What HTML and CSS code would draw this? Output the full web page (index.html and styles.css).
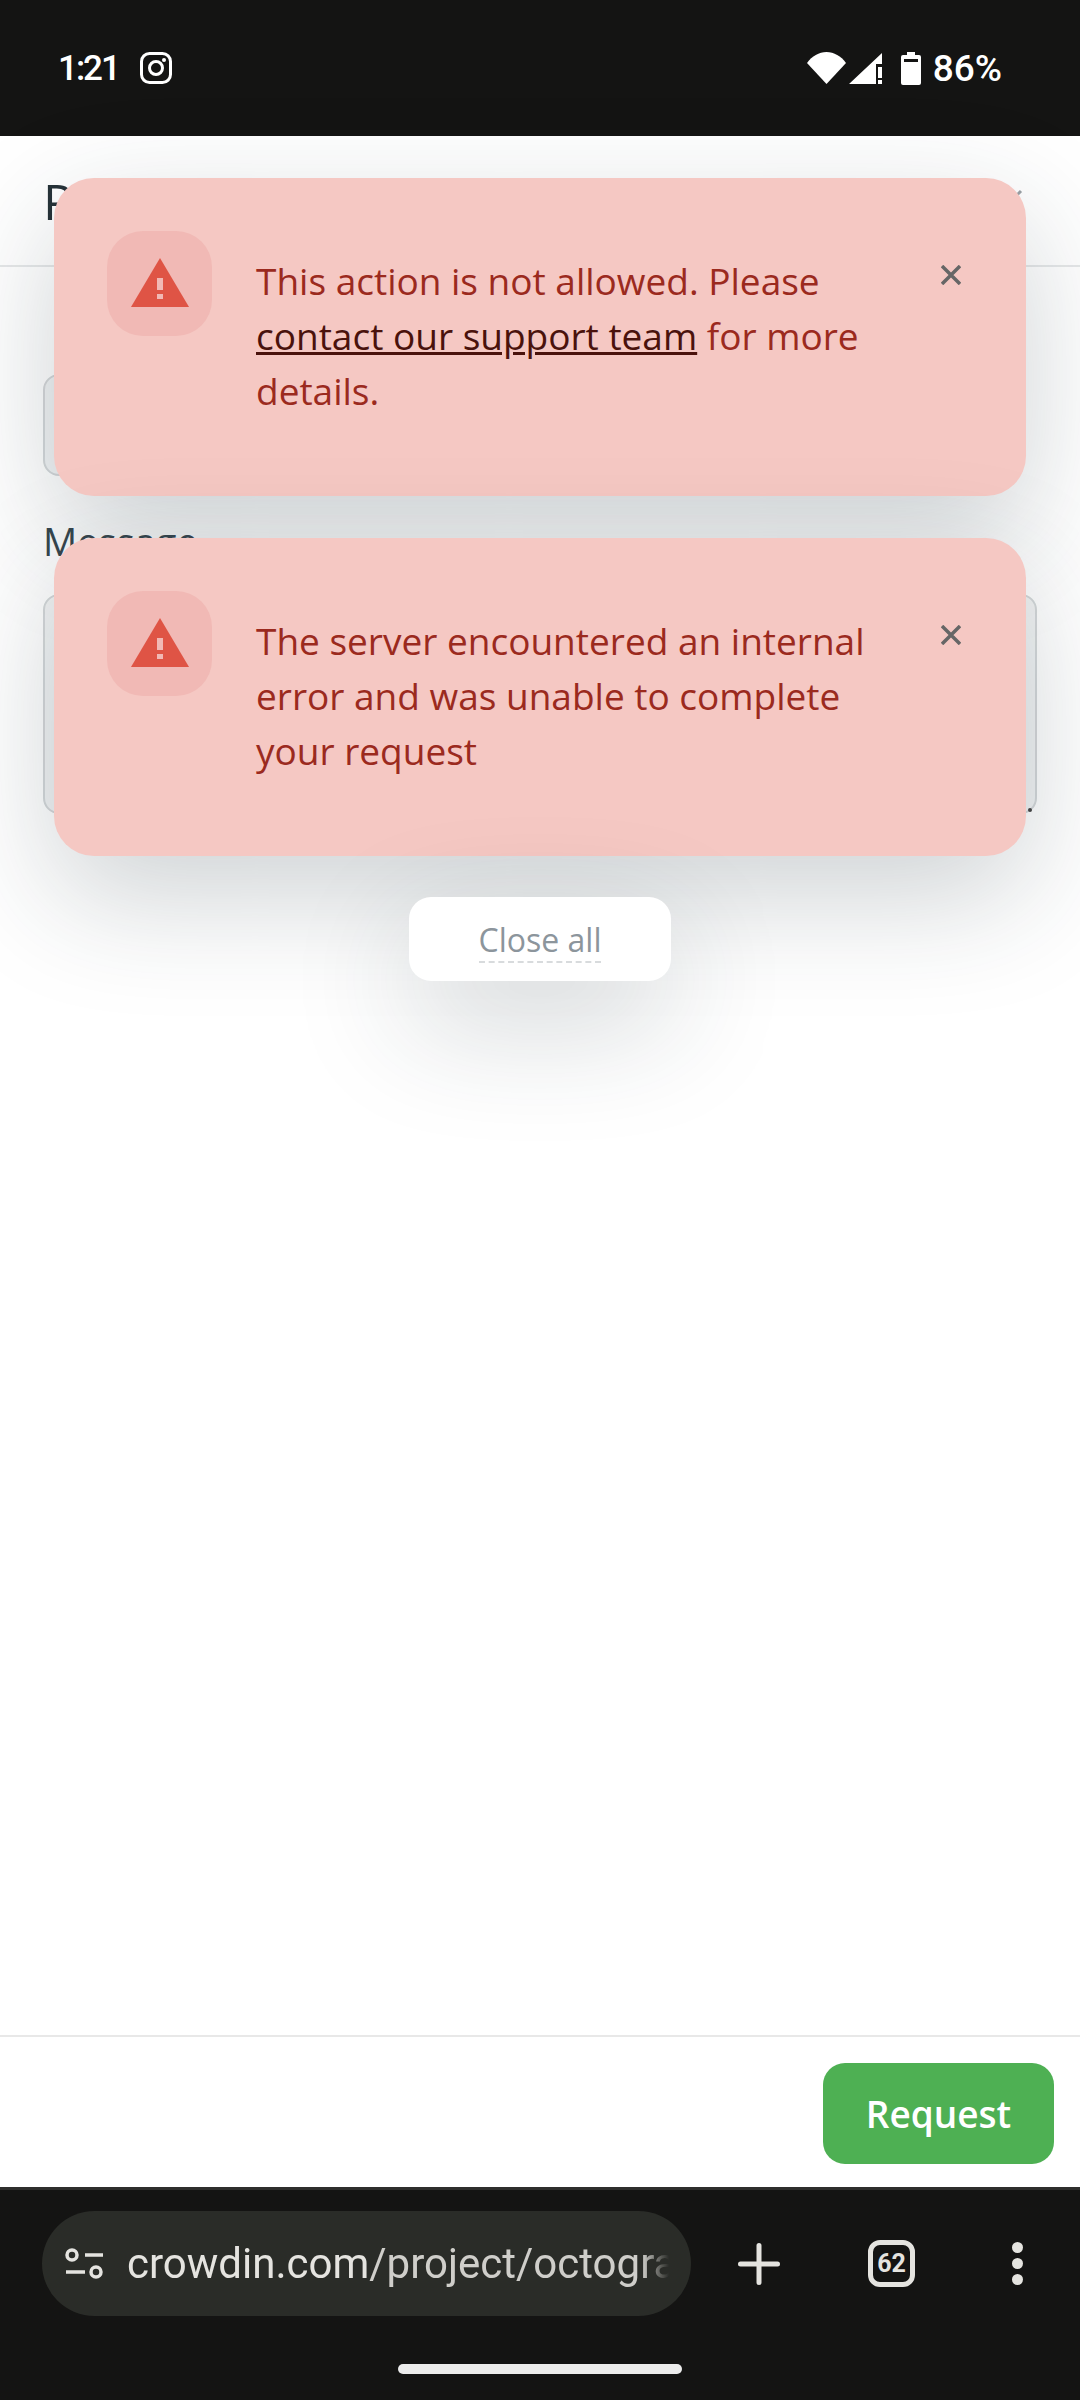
FILE: index.html
```html
<!DOCTYPE html>
<html lang="en">
<head>
  <meta charset="UTF-8">
  <title>Crowdin request</title>
  <link rel="stylesheet" href="styles.css">
</head>
<body>

  <!-- Phone status bar -->
  <div class="status-bar">
    <div class="status-left">
      <span class="status-time">1:21</span>
      <svg class="icon-insta" viewBox="0 0 32 32" width="32" height="32">
        <rect x="1.5" y="1.5" width="29" height="29" rx="8" fill="none" stroke="#fff" stroke-width="3"/>
        <circle cx="16" cy="16" r="6.5" fill="none" stroke="#fff" stroke-width="3"/>
        <circle cx="24" cy="8" r="2" fill="#fff"/>
      </svg>
    </div>
    <div class="status-right">
      <svg viewBox="0 0 39 32" width="39" height="32">
        <path d="M0 11C5 4 12 0 19.5 0C27 0 34 4 39 11L19.5 32Z" fill="#fff"/>
      </svg>
      <svg class="icon-signal" viewBox="0 0 33 31" width="33" height="31">
        <path d="M0 31L33 0V11H27V31Z" fill="#fff"/>
        <path d="M29 14H33V25H29ZM29 27H33V31H29Z" fill="#fff"/>
      </svg>
      <svg class="icon-battery" viewBox="0 0 20 33" width="20" height="33">
        <path d="M6 0H14V3H18Q20 3 20 5V31Q20 33 18 33H2Q0 33 0 31V5Q0 3 2 3H6Z" fill="#fff"/>
        <rect x="3" y="7" width="14" height="3" fill="#141413"/>
      </svg>
      <span class="status-pct">86%</span>
    </div>
  </div>

  <!-- Page behind the notifications -->
  <div class="page">
    <div class="topbar">
      <span class="topbar-title">Proofreader</span>
      <svg class="topbar-close" viewBox="0 0 24 24" width="24" height="24">
        <path d="M2 2L22 22M22 2L2 22" stroke="#9aa1a5" stroke-width="3"/>
      </svg>
    </div>
    <div class="form">
      <div class="field field-short"></div>
      <div class="label">Message</div>
      <div class="field field-big"><span class="resize-dot"></span></div>
    </div>
    <div class="footer">
      <button class="request-btn">Request</button>
    </div>

    <!-- Notifications -->
    <div class="toasts">
      <div class="toast">
        <div class="toast-icon">
          <svg viewBox="0 0 58 49" width="58" height="49">
            <path d="M29 0L58 49H0Z" fill="#df5445"/>
            <path d="M26 20H32V32H26ZM26 36H32V41H26Z" fill="#f1b9b5"/>
          </svg>
        </div>
        <p class="toast-text">This action is not allowed. Please <a href="#">contact our support team</a> for more details.</p>
        <svg class="toast-close" viewBox="0 0 20 20" width="20" height="20">
          <path d="M1 1L19 19M19 1L1 19" stroke="#666" stroke-width="3.5"/>
        </svg>
      </div>
      <div class="toast">
        <div class="toast-icon">
          <svg viewBox="0 0 58 49" width="58" height="49">
            <path d="M29 0L58 49H0Z" fill="#df5445"/>
            <path d="M26 20H32V32H26ZM26 36H32V41H26Z" fill="#f1b9b5"/>
          </svg>
        </div>
        <p class="toast-text">The server encountered an internal error and was unable to complete your request</p>
        <svg class="toast-close" viewBox="0 0 20 20" width="20" height="20">
          <path d="M1 1L19 19M19 1L1 19" stroke="#666" stroke-width="3.5"/>
        </svg>
      </div>
      <button class="close-all"><span>Close all</span></button>
    </div>
  </div>

  <!-- Browser bottom bar -->
  <div class="browser-bar">
    <div class="browser-row">
      <div class="url-pill">
        <svg class="icon-tune" viewBox="0 0 38 31" width="38" height="31">
          <circle cx="7" cy="7" r="5" fill="none" stroke="#e5e4e0" stroke-width="3.5"/>
          <path d="M20 7H38M1 24H20" stroke="#e5e4e0" stroke-width="3.5"/>
          <circle cx="31" cy="24" r="5" fill="none" stroke="#e5e4e0" stroke-width="3.5"/>
        </svg>
        <div class="url-text"><span class="url-host">crowdin.com</span>/project/octogra</div>
      </div>
      <svg class="icon-plus" viewBox="0 0 42 42" width="42" height="42">
        <path d="M21 2.5V39.5M2.5 21H39.5" stroke="#e5e4e0" stroke-width="5" stroke-linecap="round"/>
      </svg>
      <div class="tab-count">62</div>
      <div class="menu-dots"><span></span><span></span><span></span></div>
    </div>
    <div class="home-bar"></div>
  </div>

</body>
</html>
```

FILE: styles.css
```css
* {
  box-sizing: border-box;
}

body {
  margin: 0;
  width: 1080px;
  height: 2400px;
  display: flex;
  flex-direction: column;
  font-family: 'Open Sans', sans-serif;
  background: #fff;
  overflow: hidden;
}

/* Status bar */
.status-bar {
  height: 136px;
  background: #141413;
  color: #fff;
  display: flex;
  justify-content: space-between;
  align-items: center;
  padding: 0 78px 0 58px;
  font-family: 'Roboto', sans-serif;
  font-weight: 500;
  font-size: 35px;
}

.status-left,
.status-right {
  display: flex;
  align-items: center;
}

.status-left {
  gap: 21px;
}

.status-time {
  letter-spacing: -2px;
}

.icon-signal {
  margin-left: 3px;
}

.icon-battery {
  margin-left: 19px;
}

.status-pct {
  margin-left: 12px;
  font-size: 37px;
}

/* Page */
.page {
  flex: 1;
  display: flex;
  flex-direction: column;
  position: relative;
}

.topbar {
  height: 131px;
  border-bottom: 2px solid #e6e8e9;
  display: flex;
  justify-content: space-between;
  align-items: center;
  padding: 0 57px 0 43px;
}

.topbar-title {
  font-size: 50px;
  color: #263238;
}

.form {
  flex: 1;
  padding: 107px 43px 0;
}

.field {
  height: 102px;
  background: #f1f3f4;
  border: 2px solid #d5d8da;
  border-radius: 16px;
}

.field-short {
  width: 800px;
}

.field-big {
  height: 220px;
  position: relative;
}

.resize-dot {
  position: absolute;
  right: 3px;
  bottom: 0;
  width: 4px;
  height: 4px;
  border-radius: 50%;
  background: #444;
}

.label {
  margin: 43px 0 30px;
  font-size: 38px;
  line-height: 45px;
  color: #37474f;
}

.footer {
  height: 152px;
  border-top: 2px solid #e8e8e8;
  padding: 26px 26px 0 0;
  display: flex;
  justify-content: flex-end;
  align-items: flex-start;
}

.request-btn {
  width: 231px;
  height: 101px;
  border: none;
  border-radius: 22px;
  background: #4eb053;
  color: #fff;
  font-family: inherit;
  font-size: 37px;
  font-weight: 550;
}

/* Notifications */
.toasts {
  position: absolute;
  top: 42px;
  left: 54px;
  right: 54px;
  display: flex;
  flex-direction: column;
  align-items: center;
  gap: 42px;
}

.toast {
  width: 100%;
  display: flex;
  padding: 53px 65px 78px 53px;
  background: #f5c8c3;
  border-radius: 40px;
  box-shadow: 0 40px 120px rgba(30, 50, 60, 0.22);
}

.toast-icon {
  flex: none;
  width: 105px;
  height: 105px;
  margin-right: 44px;
  border-radius: 36px;
  background: #f1b9b5;
  display: flex;
  justify-content: center;
  align-items: center;
}

.toast-icon svg {
  margin-bottom: 2px;
}

.toast-text {
  flex: 1;
  margin: 22px 45px 0 0;
  font-size: 37px;
  line-height: 55px;
  color: #9b2a1e;
}

.toast-text a {
  color: #4a120c;
}

.toast-close {
  flex: none;
  margin-top: 34px;
}

.close-all {
  width: 262px;
  height: 84px;
  margin-top: -1px;
  border: none;
  border-radius: 22px;
  background: #fff;
  box-shadow: 0 40px 120px rgba(30, 50, 60, 0.22);
  font-family: inherit;
  font-size: 32px;
  color: #8c959c;
}

.close-all span {
  border-bottom: 2px dashed #d8dbdd;
}

/* Browser bar */
.browser-bar {
  height: 213px;
  flex: none;
  background: #141413;
  border-top: 3px solid #2f2f2d;
  padding-top: 21px;
}

.browser-row {
  height: 105px;
  display: flex;
  align-items: center;
  padding-left: 42px;
}

.url-pill {
  width: 649px;
  height: 105px;
  border-radius: 53px;
  background: #2a2c28;
  display: flex;
  align-items: center;
  padding: 0 22px 0 22px;
}

.icon-tune {
  flex: none;
  margin-left: 1px;
}

.url-text {
  margin-left: 24px;
  flex: 1;
  overflow: hidden;
  white-space: nowrap;
  font-family: 'Roboto', sans-serif;
  font-size: 42px;
  color: #cfceca;
  -webkit-mask-image: linear-gradient(to right, #000 95%, transparent);
  mask-image: linear-gradient(to right, #000 95%, transparent);
}

.url-host {
  color: #e5e4e0;
}

.icon-plus {
  flex: none;
  margin-left: 47px;
}

.tab-count {
  flex: none;
  width: 47px;
  height: 47px;
  margin-left: 88px;
  border: 5px solid #e5e4e0;
  border-radius: 12px;
  color: #e5e4e0;
  font-family: 'Roboto', sans-serif;
  font-weight: 700;
  font-size: 25px;
  display: flex;
  justify-content: center;
  align-items: center;
}

.menu-dots {
  flex: none;
  margin-left: 97px;
  display: flex;
  flex-direction: column;
  gap: 5px;
}

.menu-dots span {
  width: 11px;
  height: 11px;
  border-radius: 50%;
  background: #e5e4e0;
}

.home-bar {
  width: 284px;
  height: 10px;
  margin: 48px auto 0;
  border-radius: 5px;
  background: #ececec;
}
```
